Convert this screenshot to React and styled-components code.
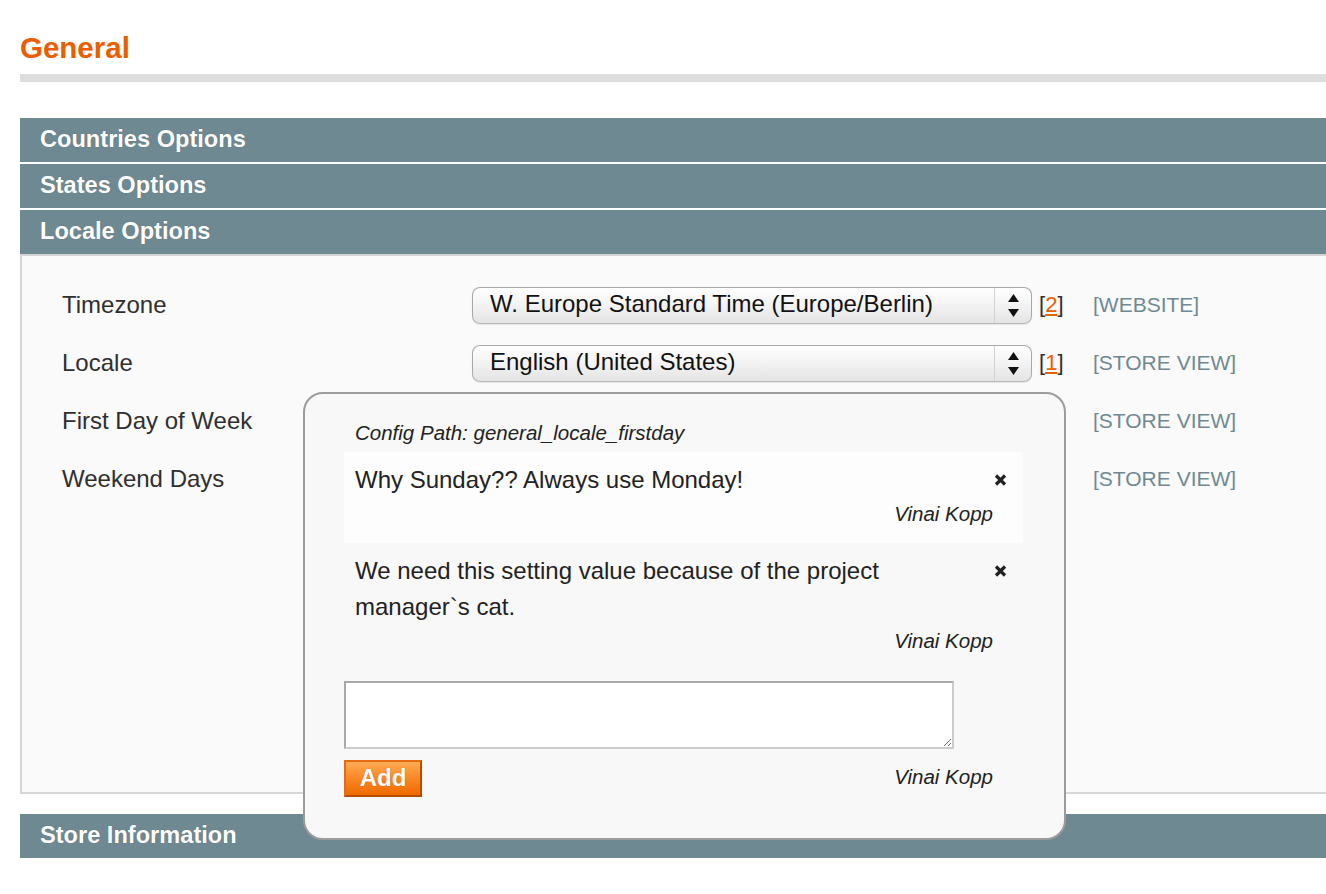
import React from "react";
import styled, { createGlobalStyle } from "styled-components";

const GlobalStyle = createGlobalStyle`
  html, body {
    margin: 0;
    padding: 0;
    background: #ffffff;
    overflow: hidden;
  }
  body {
    font-family: "Liberation Sans", Arial, Helvetica, sans-serif;
    color: #2f2f2f;
  }
`;

const Page = styled.div`
  width: 1360px;
  padding: 30px 0 0 20px;
`;

const Title = styled.h1`
  margin: 0;
  font-size: 29.5px;
  line-height: 36px;
  font-weight: bold;
  color: #eb5e00;
`;

const Rule = styled.div`
  height: 8px;
  margin-top: 8px;
  background: #dddddd;
`;

const Sections = styled.div`
  margin-top: 36px;
`;

const SectionHead = styled.div`
  height: 44px;
  box-sizing: border-box;
  padding: 0 20px 1px;
  line-height: 43px;
  background: #6f8992;
  color: #ffffff;
  font-size: 23.6px;
  font-weight: bold;
  text-shadow: 0 0 1px rgba(40, 55, 60, 0.35);
  margin-bottom: ${(p) => (p.$open ? "0" : "2px")};
`;

const SectionBody = styled.div`
  position: relative;
  height: 540px;
  box-sizing: border-box;
  background: #fafafa;
  border: 2px solid #d6d6d6;
  padding: 20px 0 0 40px;
  margin-bottom: 20px;
`;

const FormRow = styled.div`
  display: grid;
  grid-template-columns: 410px 560px 61px auto;
  align-items: center;
  height: 58px;
`;

const Label = styled.div`
  font-size: 24px;
  line-height: 28px;
  color: #2f2f2f;
`;

const SelectBox = styled.div`
  display: flex;
  height: 37px;
  box-sizing: border-box;
  border: 1px solid #a8a8a8;
  border-bottom-color: #b8b8b8;
  border-radius: 8px;
  background: linear-gradient(#ffffff 0%, #f4f4f4 45%, #e4e4e4 100%);
  box-shadow: inset 0 1px 0 #ffffff, 0 1px 1px rgba(0, 0, 0, 0.08);
  overflow: hidden;
`;

const SelectText = styled.div`
  flex: 1;
  padding-left: 17px;
  font-size: 24px;
  line-height: 32px;
  color: #111111;
  white-space: nowrap;
`;

const SelectArrow = styled.div`
  width: 36px;
  border-left: 1px solid #d2d2d2;
  display: flex;
  align-items: center;
  justify-content: center;
`;

const Use = styled.div`
  padding-left: 7px;
  font-size: 22px;
  color: #2f2f2f;
`;

const UseLink = styled.a`
  color: #eb5e00;
  text-decoration: underline;
`;

const Scope = styled.div`
  font-size: 21px;
  color: #6f8992;
  white-space: nowrap;
`;

const Popup = styled.div`
  position: absolute;
  left: 281px;
  top: 136px;
  width: 763px;
  box-sizing: border-box;
  background: #f8f8f8;
  border: 2px solid #9c9c9c;
  border-radius: 20px;
  padding: 24px 41px 41px 39px;
  color: #222222;
`;

const ConfigPath = styled.div`
  font-style: italic;
  font-size: 20.5px;
  line-height: 30px;
  padding-left: 11px;
  margin-bottom: 4px;
`;

const Comment = styled.div`
  display: grid;
  grid-template-columns: 1fr auto;
  padding: 10px 16px 14px 11px;
  background: ${(p) => (p.$highlight ? "#fdfdfd" : "transparent")};
`;

const CommentText = styled.div`
  font-size: 24px;
  line-height: 36px;
  padding-right: 20px;
`;

const Remove = styled.button`
  align-self: start;
  height: 36px;
  padding: 0;
  border: 0;
  background: none;
  display: flex;
  align-items: center;
  cursor: pointer;
`;

const Author = styled.div`
  grid-column: 1 / -1;
  text-align: right;
  padding-right: 14px;
  margin-top: 1px;
  font-style: italic;
  font-size: 20.5px;
  line-height: 30px;
`;

const NoteInput = styled.textarea`
  display: block;
  width: 610px;
  height: 68px;
  box-sizing: border-box;
  margin: 11px 0 0;
  border: 2px solid;
  border-color: #a9a9a9 #cccccc #cccccc #a9a9a9;
  background: #ffffff;
  resize: both;
  font-family: inherit;
  font-size: 18px;
`;

const Footer = styled.div`
  display: flex;
  justify-content: space-between;
  align-items: center;
  margin-top: 11px;
  padding-right: 30px;
`;

const AddButton = styled.button`
  width: 78px;
  height: 37px;
  box-sizing: border-box;
  padding: 0 0 2px;
  border: 2px solid;
  border-color: #e86a10 #b84d00 #b84d00 #e86a10;
  background: linear-gradient(#ffac55 0%, #fb8a2a 45%, #ee6b00 100%);
  color: #ffffff;
  font-family: inherit;
  font-size: 24px;
  font-weight: bold;
  text-shadow: 0 0 1px rgba(150, 60, 0, 0.5);
  cursor: pointer;
`;

const FooterAuthor = styled.div`
  font-style: italic;
  font-size: 20.5px;
  line-height: 30px;
  padding-bottom: 3px;
`;

const Arrows = () => (
  <svg width="11" height="23" viewBox="0 0 11 23">
    <path d="M5.5 0 L11 8 L0 8 Z" fill="#111" />
    <path d="M0 15 L11 15 L5.5 23 Z" fill="#111" />
  </svg>
);

const Cross = () => (
  <svg width="13" height="12" viewBox="0 0 13 12">
    <path d="M2 1.5 L11 10.5 M11 1.5 L2 10.5" stroke="#222" strokeWidth="3.2" strokeLinecap="butt" />
  </svg>
);

const rows = [
  { label: "Timezone", value: "W. Europe Standard Time (Europe/Berlin)", use: "2", scope: "[WEBSITE]" },
  { label: "Locale", value: "English (United States)", use: "1", scope: "[STORE VIEW]" },
  { label: "First Day of Week", value: "Sunday", use: "1", scope: "[STORE VIEW]" },
  { label: "Weekend Days", value: "Saturday", use: "1", scope: "[STORE VIEW]" },
];

const comments = [
  { text: "Why Sunday?? Always use Monday!", author: "Vinai Kopp", highlight: true },
  {
    text: "We need this setting value because of the project manager`s cat.",
    author: "Vinai Kopp",
    highlight: false,
  },
];

export default function App() {
  return (
    <>
      <GlobalStyle />
      <Page>
        <Title>General</Title>
        <Rule />
        <Sections>
          <SectionHead>Countries Options</SectionHead>
          <SectionHead>States Options</SectionHead>
          <SectionHead $open>Locale Options</SectionHead>
          <SectionBody>
            {rows.map((r) => (
              <FormRow key={r.label}>
                <Label>{r.label}</Label>
                <SelectBox>
                  <SelectText>{r.value}</SelectText>
                  <SelectArrow>
                    <Arrows />
                  </SelectArrow>
                </SelectBox>
                <Use>
                  [<UseLink>{r.use}</UseLink>]
                </Use>
                <Scope>{r.scope}</Scope>
              </FormRow>
            ))}
            <Popup>
              <ConfigPath>Config Path: general_locale_firstday</ConfigPath>
              {comments.map((c, i) => (
                <Comment key={i} $highlight={c.highlight}>
                  <CommentText>{c.text}</CommentText>
                  <Remove aria-label="remove">
                    <Cross />
                  </Remove>
                  <Author>{c.author}</Author>
                </Comment>
              ))}
              <NoteInput />
              <Footer>
                <AddButton>Add</AddButton>
                <FooterAuthor>Vinai Kopp</FooterAuthor>
              </Footer>
            </Popup>
          </SectionBody>
          <SectionHead>Store Information</SectionHead>
        </Sections>
      </Page>
    </>
  );
}
